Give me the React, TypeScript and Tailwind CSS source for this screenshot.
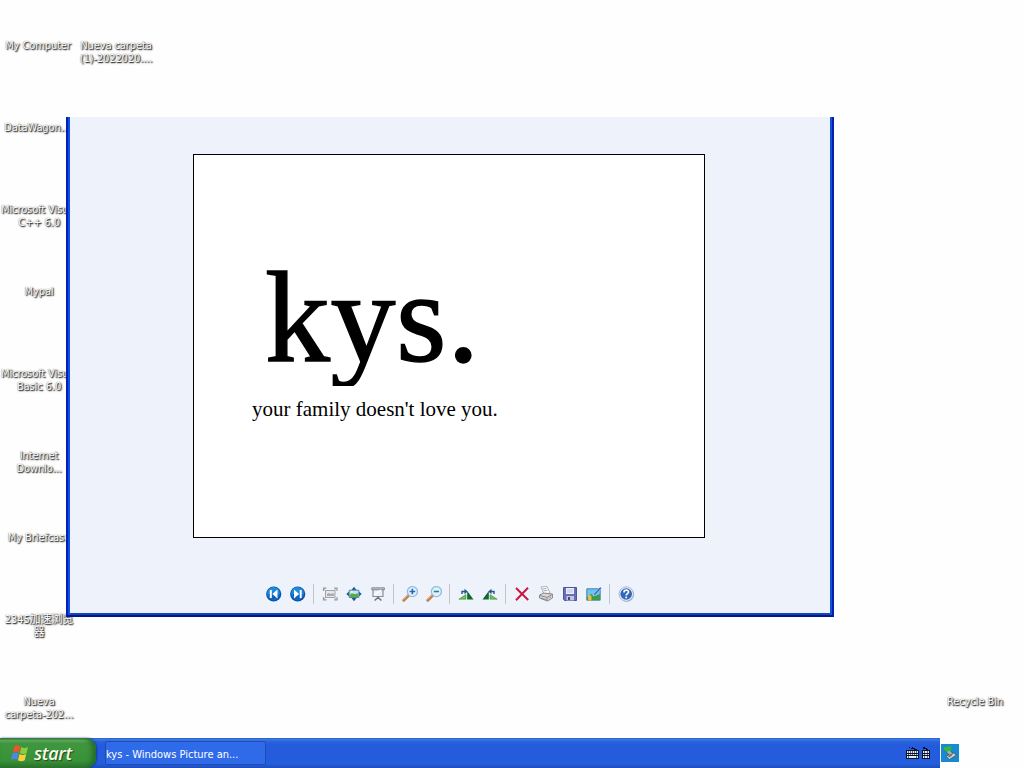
import React from 'react';
import clsx from 'clsx';

type IconLabel = { lines: string[]; place: string };

const labels: IconLabel[] = [
    { lines: ['My Computer'], place: 'left-0 top-[39px]' },
    { lines: ['Nueva carpeta', '(1)-2022020....'], place: 'left-[78px] top-[39px]' },
    { lines: ['DataWagon...'], place: 'left-[-1px] top-[121px]' },
    { lines: ['Microsoft Visual', 'C++ 6.0'], place: 'left-[1px] top-[203px]' },
    { lines: ['Mypal'], place: 'left-[1px] top-[285px]' },
    { lines: ['Microsoft Visual', 'Basic 6.0'], place: 'left-[1px] top-[367px]' },
    { lines: ['Internet', 'Downlo...'], place: 'left-[1px] top-[449px]' },
    { lines: ['My Briefcase'], place: 'left-[1px] top-[531px]' },
    { lines: ['2345加速浏览', '器'], place: 'left-[1px] top-[613px]' },
    { lines: ['Nueva', 'carpeta-202...'], place: 'left-[1px] top-[695px]' },
    { lines: ['Recycle Bin'], place: 'left-[937px] top-[695px]' },
];

const DesktopLabel: React.FC<IconLabel> = ({ lines, place }) => (
    <div
        className={clsx(
            "absolute flex w-[76px] flex-col items-center whitespace-nowrap font-['DejaVu_Sans_Condensed','Noto_Sans_CJK_SC',sans-serif] text-[11px] leading-[13px] tracking-[-0.1px] text-white [text-shadow:1px_1px_1px_#333,0_0_1px_#555,1px_1px_2px_#777]",
            place,
        )}
    >
        {lines.map((line) => (
            <span key={line}>{line}</span>
        ))}
    </div>
);

const Icon: React.FC<{ children: React.ReactNode }> = ({ children }) => (
    <button className="flex size-6 items-center justify-center">
        <svg width="16" height="16" viewBox="0 0 16 16" fill="none">
            {children}
        </svg>
    </button>
);

const Separator = () => (
    <div className="flex h-6 w-2 items-center pl-[3px]">
        <div className="h-5 w-px bg-[#c3c4cb]" />
    </div>
);

const Magnifier: React.FC<{ plus?: boolean }> = ({ plus }) => (
    <Icon>
        <path d="M1.8 14.2 6.3 9.7" stroke="#c07f4d" strokeWidth="3" strokeLinecap="round" />
        <path d="M1.2 13.6 5.6 9.2" stroke="#f0c096" strokeWidth="1" />
        <circle cx="10.4" cy="5.6" r="5" fill="#dff3fc" stroke="#9cb9df" strokeWidth="1.3" />
        <path d={plus ? 'M7.6 5.5h5.6M10.4 2.7v5.6' : 'M7.8 5.5H13'} stroke={plus ? '#2664c0' : '#168b93'} strokeWidth="1.6" />
    </Icon>
);

const Toolbar = () => (
    <div className="flex h-6 justify-center">
        <Icon>
            <circle cx="7.7" cy="8" r="7.6" fill="#0a54ae" />
            <circle cx="7.5" cy="7.3" r="6.3" fill="#1c8ade" />
            <path d="M2 9c3-3 8-3 11 0-1 5-9 6-11 0" fill="#0963bd" />
            <path d="M3.8 4h2v8h-2zM11.5 3.6v8.8L6.3 8z" fill="#fff" />
        </Icon>
        <Icon>
            <circle cx="7.7" cy="8" r="7.6" fill="#0a54ae" />
            <circle cx="7.5" cy="7.3" r="6.3" fill="#1c8ade" />
            <path d="M2 9c3-3 8-3 11 0-1 5-9 6-11 0" fill="#0963bd" />
            <path d="M9.7 4h2v8h-2zM4 3.6v8.8L9.2 8z" fill="#fff" />
        </Icon>
        <Separator />
        <Icon>
            <path d="M1.5 5V2.2h3M12 2.2h3V5M15 11v2.8h-3M4.5 13.8h-3V11" stroke="#9999a1" strokeWidth="1.2" />
            <path d="m2 3 2 2m10-2-2 2m2 8-2-2M2 13l2-2" stroke="#b2b2b8" />
            <path d="M3.5 4.5h9.5v7H3.5z" fill="#e7e7eb" stroke="#a1a1a7" />
            <path d="M5 10V8l2-1 2 1 2-1 1 1v2z" fill="#aaaab0" />
        </Icon>
        <Icon>
            <path d="M8 .8 5.5 4h5zM8 15.2 5.5 12h5zM.3 8 3 5.5v5zM15.7 8 13 5.5v5z" fill="#25558f" />
            <path d="M3.2 4.2h9.6v7.3H3.2z" fill="#b7e4ff" stroke="#5386ad" />
            <path d="M4 11V8.5l2-1.3 3 1 3-1V11z" fill="#56ae35" />
            <circle cx="6" cy="6" r="1" fill="#fff5a2" />
        </Icon>
        <Icon>
            <path d="M3 3.5h10v7H3z" fill="#edf0f7" stroke="#8c8e9b" strokeWidth="1.2" />
            <path d="M1.8 1.8h12.6v2H1.8z" fill="#c7cad5" stroke="#7e808c" strokeWidth=".9" />
            <path d="m4 9 7-5" stroke="#fff" strokeWidth="1.5" />
            <path d="M8 10.5V13M8 11.5l-3.4 3M8 11.5l3.4 3" stroke="#70727d" strokeWidth="1.6" />
        </Icon>
        <Separator />
        <Magnifier plus />
        <Magnifier />
        <Separator />
        <Icon>
            <path d="M.8 13.2 8 8.6v4.6z" fill="#75bd58" stroke="#39953a" strokeWidth=".6" />
            <path d="M9.2 5 15.5 13.5H9.2z" fill="#0e6830" />
            <path d="M4 8V5.5h3.5" stroke="#245493" strokeWidth="1.4" />
            <path d="m6.5 2.8 3.2 2.7-3.2 2.7z" fill="#245493" />
        </Icon>
        <Icon>
            <path d="M15.2 13.2 8 8.6v4.6z" fill="#75bd58" stroke="#39953a" strokeWidth=".6" />
            <path d="M6.8 5 .5 13.5h6.3z" fill="#0e6830" />
            <path d="M12 8V5.5H8.5" stroke="#245493" strokeWidth="1.4" />
            <path d="M9.5 2.8 6.3 5.5l3.2 2.7z" fill="#245493" />
        </Icon>
        <Separator />
        <Icon>
            <path d="m2 2 12.2 12M14 1.7 2 14.2" stroke="#ca1743" strokeWidth="2" />
        </Icon>
        <Icon>
            <path d="m3 1 6-.6 3 6.6-6 1z" fill="#fff" stroke="#a1a3aa" strokeWidth=".8" />
            <path d="m4.5 3 4-.5m-3 2.4 4-.5" stroke="#8c8e96" strokeWidth=".8" />
            <path d="m1.5 9 4-2 9 1v4l-5 3-8-3z" fill="#d5d5d7" stroke="#7f8186" strokeWidth=".9" />
            <path d="m2 9.5 7 2 5-3M9 12v3M3 12l5 2" stroke="#818389" strokeWidth=".9" />
            <path d="m11 11.8 2-1" stroke="#e2a745" strokeWidth="1.3" />
        </Icon>
        <Icon>
            <path d="M1.5 1.5h13v13h-12l-1-1z" fill="#6a6cb4" stroke="#50539d" />
            <path d="M4 2h8v6H4z" fill="#edf0fc" />
            <path d="M5 4h6M5 6h6" stroke="#b6bddd" />
            <path d="M4.5 10H12v4.5H4.5z" fill="#c2c6df" />
            <path d="M6 11h2v3H6z" fill="#40458c" />
        </Icon>
        <Icon>
            <path d="M.8 2.8h13.4v11.4H.8z" fill="#6dc2f4" stroke="#3e86ad" />
            <path d="m1 11 4-3 4 2 5-2v6H1z" fill="#3f9b43" />
            <path d="M3 8.5 5.5 10v4.5H2V10z" fill="#e9bd3f" />
            <path d="m7 10 1-2.5L14.2 1l1.5 1.2L9.5 9z" fill="#326bb9" stroke="#dcecff" strokeWidth=".5" />
        </Icon>
        <Separator />
        <Icon>
            <circle cx="9" cy="8.7" r="7" fill="#aeb3c2" />
            <circle cx="8.2" cy="8" r="7.2" fill="#e9effa" stroke="#8ba2ca" strokeWidth=".7" />
            <circle cx="8.2" cy="8" r="5.8" fill="#3266b9" />
            <path d="M6 6.4c0-3 4.7-2.8 4.5-.2C10.4 7.7 8.2 7.6 8.2 9.4" stroke="#fff" strokeWidth="1.7" />
            <path d="M7.3 10.6h1.8v1.7H7.3z" fill="#fff" />
        </Icon>
    </div>
);

const PictureViewer = () => (
    <div className="absolute left-[66px] top-[117px] flex h-[500px] w-[768px] flex-col border-x-2 border-b-2 border-x-[#0420b4] border-b-[#001890] bg-[#eef2fb] shadow-[inset_2px_0_#0c50e4,inset_-2px_0_#1450d6,inset_0_-2px_#1446b8]">
        <div className="ml-[125px] mt-[37px] h-96 w-[512px] shrink-0 border border-black bg-white font-['Liberation_Serif',serif] text-black">
            <div className="ml-[71px] mt-[93px] h-[138px] overflow-hidden whitespace-nowrap text-[130px] leading-[138px] tracking-[0.5px] [-webkit-text-stroke:1.4px_black]">
                kys.
            </div>
            <div className="ml-[58px] mt-[11px] whitespace-nowrap text-[21px] leading-6">
                your family doesn't love you.
            </div>
        </div>
        <div className="mt-[44px]">
            <Toolbar />
        </div>
    </div>
);

const WindowsFlag = () => (
    <svg width="19" height="18" viewBox="0 0 19 18">
        <path d="M3.3 2.2c2-1.5 4-1.3 6.2-.1L8 8.5c-2-1.1-4-1.2-6.2.1z" fill="#e8562c" />
        <path d="M10.3 3c2 1.2 4 1.2 6.7 0l-1.5 6.2c-2.3 1.2-4.7 1.1-6.7-.1z" fill="#8fca45" />
        <path d="M1.4 9.5c2.2-1.4 4.2-1.2 6.3-.1l-1.5 6.4c-2-1.1-4.1-1.2-6.2.1z" fill="#4f86e6" />
        <path d="M8.5 10c2.2 1.2 4.2 1.2 6.7 0l-1.5 6.3c-2.3 1.2-4.7 1.1-6.7-.1z" fill="#fbd13b" />
    </svg>
);

const Taskbar = () => (
    <div className="absolute bottom-0 left-0 flex h-[30px] w-[940px] items-center bg-[linear-gradient(#2a5fcb_0%,#3a7ae6_6%,#2a62dd_12%,#245bdc_25%,#245ddd_85%,#1e4db9_100%)]">
        <button className="flex h-[30px] w-[96px] items-center rounded-r-[10px] bg-[linear-gradient(#397d3a_0%,#64ae63_8%,#3f963e_18%,#389238_75%,#2c762d_100%)] pl-[11px] shadow-[inset_-4px_0_5px_#266d2b,1px_0_2px_#153b94]">
            <WindowsFlag />
            <span className="ml-[4px] font-['Open_Sans',sans-serif] text-[18px] font-semibold italic leading-6 tracking-[-0.3px] text-[#f5f8e8] [text-shadow:1px_1px_1px_#1e4b20]">
                start
            </span>
        </button>
        <button className="ml-[9px] flex h-6 w-[161px] items-center rounded-[2px] border border-[#204bb5] bg-[#2f6ae8] pt-[3px] text-left font-['DejaVu_Sans_Condensed',sans-serif] text-[11px] leading-4 text-white">
            <span className="whitespace-nowrap">kys - Windows Picture an...</span>
        </button>
        <svg className="ml-auto mr-[9px]" width="26" height="14" viewBox="0 0 26 14" shapeRendering="crispEdges">
            <path d="M4 1h1v1h2V1h1v1h2v1h2v1H9V3H6V2H4zM18 1h2v1h2v1h1v1h-2V3h-3z" fill="#07112b" />
            <path d="M1 4h13v9H1zM17 4h8v9h-8z" fill="#07112b" />
            <path d="M2 5h11v7H2zM18 5h6v7h-6z" fill="#e8eaf2" />
            <path d="M2 7.5h11M2 9.5h11M18 7.5h6M18 9.5h6" stroke="#07112b" />
            <path d="M3.5 5v7M5.5 5v5M7.5 5v5M9.5 5v5M11.5 5v7M19.5 5v7M22.5 5v7" stroke="#07112b" strokeOpacity=".6" />
        </svg>
    </div>
);

const TrayIcon = () => (
    <svg className="absolute left-[941px] top-[744px]" width="18" height="18" viewBox="0 0 18 18">
        <path d="M0 0h18v18H0z" fill="#168bd2" />
        <path d="m5 12.5 7-4 3.5 2.5-7 4.5z" fill="#c9cfcd" stroke="#44545b" strokeWidth=".8" />
        <path d="m4.5 7.5 4.5 4 3-2-4-4z" fill="#9fb0af" stroke="#37474c" strokeWidth=".7" />
        <path d="m2 3.5 8-1.5v5L8 6.5 5.5 8.5z" fill="#35b939" />
        <path d="m7.5 12.8 3-1.4" stroke="#435055" />
    </svg>
);

const App: React.FC = () => {
    return (
        <div className="relative h-[768px] w-[1024px] overflow-hidden bg-[#fefefe]">
            {labels.map((label) => (
                <DesktopLabel key={label.place} {...label} />
            ))}
            <PictureViewer />
            <Taskbar />
            <TrayIcon />
        </div>
    );
};

export default App;
